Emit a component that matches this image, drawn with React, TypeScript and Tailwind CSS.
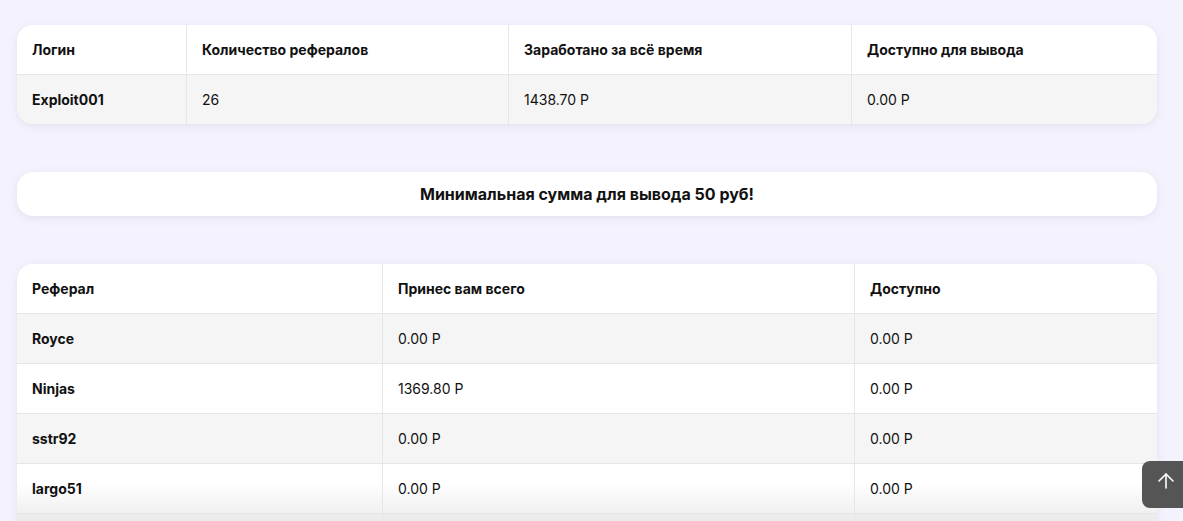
import { ArrowUp } from "lucide-react";

const summaryCols = "grid-cols-[170px_322px_343px_1fr]";
const refCols = "grid-cols-[366px_472px_1fr]";

const referrals = [
  { name: "Royce", total: "0.00 Р", available: "0.00 Р" },
  { name: "Ninjas", total: "1369.80 Р", available: "0.00 Р" },
  { name: "sstr92", total: "0.00 Р", available: "0.00 Р" },
  { name: "largo51", total: "0.00 Р", available: "0.00 Р" },
  { name: "seva", total: "0.00 Р", available: "0.00 Р" },
];

function Cell({ children, bold, last }: { children: React.ReactNode; bold?: boolean; last?: boolean }) {
  return (
    <div
      className={`flex h-[49px] items-center px-[15px] text-[14px] text-[#111] ${bold ? "font-bold" : ""} ${
        last ? "" : "border-r border-[#e6e6e6]"
      }`}
    >
      {children}
    </div>
  );
}

export default function App() {
  return (
    <div className="min-h-[521px] bg-[#f4f3fd] px-[17px] pt-[25px] pb-10 font-['Inter',sans-serif] [width:1183px]">
      <div className="w-[1140px] overflow-hidden rounded-2xl bg-white shadow-[0_2px_10px_rgba(60,60,110,0.10)]">
        <div className={`grid ${summaryCols} border-b border-[#e6e6e6] bg-white`}>
          <Cell bold>Логин</Cell>
          <Cell bold>Количество рефералов</Cell>
          <Cell bold>Заработано за всё время</Cell>
          <Cell bold last>Доступно для вывода</Cell>
        </div>
        <div className={`grid ${summaryCols} bg-[#f5f5f5]`}>
          <Cell bold>Exploit001</Cell>
          <Cell>26</Cell>
          <Cell>1438.70 Р</Cell>
          <Cell last>0.00 Р</Cell>
        </div>
      </div>

      <div className="mt-12 flex h-[44px] w-[1140px] items-center justify-center rounded-2xl bg-white text-[16px] font-bold text-[#111] shadow-[0_2px_10px_rgba(60,60,110,0.10)]">
        Минимальная сумма для вывода 50 руб!
      </div>

      <div className="mt-12 w-[1140px] overflow-hidden rounded-2xl bg-white shadow-[0_2px_10px_rgba(60,60,110,0.10)]">
        <div className={`grid ${refCols} border-b border-[#e6e6e6] bg-white`}>
          <Cell bold>Реферал</Cell>
          <Cell bold>Принес вам всего</Cell>
          <Cell bold last>Доступно</Cell>
        </div>
        {referrals.map((r, i) => (
          <div
            key={r.name}
            className={`grid ${refCols} border-b border-[#e6e6e6] ${
              i === 3
                ? "bg-gradient-to-b from-white from-40% to-[#f0f0f0]"
                : i === 4
                  ? "bg-[#ececec]"
                  : i % 2 === 0
                    ? "bg-[#f5f5f5]"
                    : "bg-white"
            }`}
          >
            <Cell bold>{r.name}</Cell>
            <Cell>{r.total}</Cell>
            <Cell last>{r.available}</Cell>
          </div>
        ))}
      </div>

      <button className="fixed top-[461px] left-[1142px] flex h-[47px] w-[50px] items-center justify-center rounded-lg bg-[#555555] text-white">
        <ArrowUp size={24} strokeWidth={1.6} className="-mt-[7px] -ml-[2px]" />
      </button>
    </div>
  );
}
